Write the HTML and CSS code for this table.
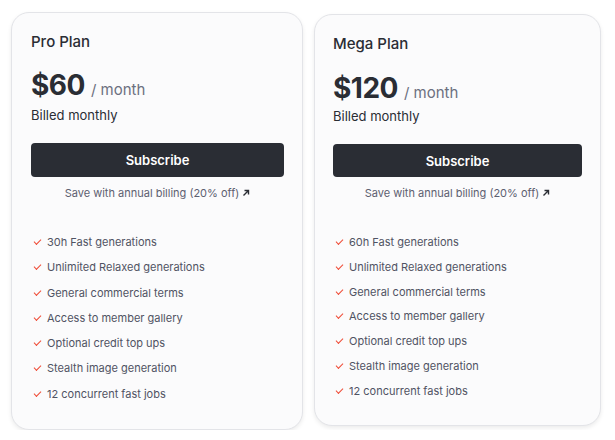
FILE: index.html
```html
<!DOCTYPE html>
<html lang="en">
<head>
    <meta charset="UTF-8">
    <meta name="viewport" content="width=device-width,initial-scale=1.0">
    <title>Plans</title>
    <link rel="stylesheet" href="styles.css">
</head>
<body>
    <main class="plans">
        <!-- Pro -->
        <section class="card card-pro">
            <h2 class="plan-name">Pro Plan</h2>
            <div class="price"><span class="amount">$60</span><span class="period">/ month</span></div>
            <p class="billed">Billed monthly</p>
            <button class="subscribe">Subscribe</button>
            <a class="annual" href="#">Save with annual billing (20% off)
                <svg width="8" height="8" viewBox="0 0 8 8"><path d="M1.5 6.5 L6.5 1.5 M2.5 1.5 H6.5 V5.5" fill="none" stroke="#2a2d34" stroke-width="1.4"/></svg>
            </a>
            <ul class="features">
                <li>30h Fast generations</li>
                <li>Unlimited Relaxed generations</li>
                <li>General commercial terms</li>
                <li>Access to member gallery</li>
                <li>Optional credit top ups</li>
                <li>Stealth image generation</li>
                <li>12 concurrent fast jobs</li>
            </ul>
        </section>
        <!-- Mega -->
        <section class="card card-mega">
            <h2 class="plan-name">Mega Plan</h2>
            <div class="price"><span class="amount">$120</span><span class="period">/ month</span></div>
            <p class="billed">Billed monthly</p>
            <button class="subscribe">Subscribe</button>
            <a class="annual" href="#">Save with annual billing (20% off)
                <svg width="8" height="8" viewBox="0 0 8 8"><path d="M1.5 6.5 L6.5 1.5 M2.5 1.5 H6.5 V5.5" fill="none" stroke="#2a2d34" stroke-width="1.4"/></svg>
            </a>
            <ul class="features">
                <li>60h Fast generations</li>
                <li>Unlimited Relaxed generations</li>
                <li>General commercial terms</li>
                <li>Access to member gallery</li>
                <li>Optional credit top ups</li>
                <li>Stealth image generation</li>
                <li>12 concurrent fast jobs</li>
            </ul>
        </section>
    </main>
</body>
</html>
```

FILE: styles.css
```css
body {
    margin: 0;
    background: #fff;
    font-family: Inter, "Noto Sans", sans-serif;
    color: #2a2d34;
}
.plans {
    display: flex;
    align-items: flex-start;
    gap: 11px;
    padding: 12px 0 0 11px;
}
.card {
    box-sizing: border-box;
    background: #fbfbfc;
    border: 1px solid #e3e4e8;
    border-radius: 18px;
    box-shadow: 0 2px 4px rgba(0,0,0,0.08);
    padding: 19px 18px 0 19px;
    display: flex;
    flex-direction: column;
}
.card-pro {
    width: 292px;
    height: 418px;
}
.card-mega {
    width: 287px;
    height: 412px;
    margin-top: 2px;
    padding-left: 18px;
}
.plan-name {
    margin: 0;
    font-size: 15px;
    font-weight: 500;
    line-height: 20px;
}
.price {
    margin-top: 16px;
    display: flex;
    align-items: baseline;
    gap: 6px;
}
.card-mega .price {
    margin-top: 17px;
}
.amount {
    font-size: 28px;
    font-weight: 700;
    line-height: 34px;
    letter-spacing: -0.5px;
}
.period {
    font-size: 15px;
    color: #6c7080;
}
.billed {
    margin: 4px 0 0;
    font-size: 13px;
    line-height: 18px;
}
.card-mega .billed {
    margin-top: 2px;
}
.subscribe {
    margin-top: 19px;
    height: 34px;
    border: none;
    border-radius: 4px;
    background: #2a2d34;
    color: #fff;
    font-family: inherit;
    font-size: 13px;
    font-weight: 600;
}
.card-mega .subscribe {
    height: 33px;
}
.annual {
    margin-top: 9px;
    text-align: center;
    font-size: 11px;
    color: #5d6070;
    text-decoration: none;
}
.features {
    list-style: none;
    margin: 30px 0 0;
    padding: 0;
}
.features li {
    position: relative;
    padding-left: 16px;
    font-size: 11px;
    line-height: 25.3px;
    color: #505363;
}
.card-mega .features li {
    line-height: 24.8px;
}
.features li::before {
    content: "";
    position: absolute;
    left: 3px;
    top: 9px;
    width: 6px;
    height: 3px;
    border-left: 1.5px solid #ef4a35;
    border-bottom: 1.5px solid #ef4a35;
    transform: rotate(-45deg);
}
```
